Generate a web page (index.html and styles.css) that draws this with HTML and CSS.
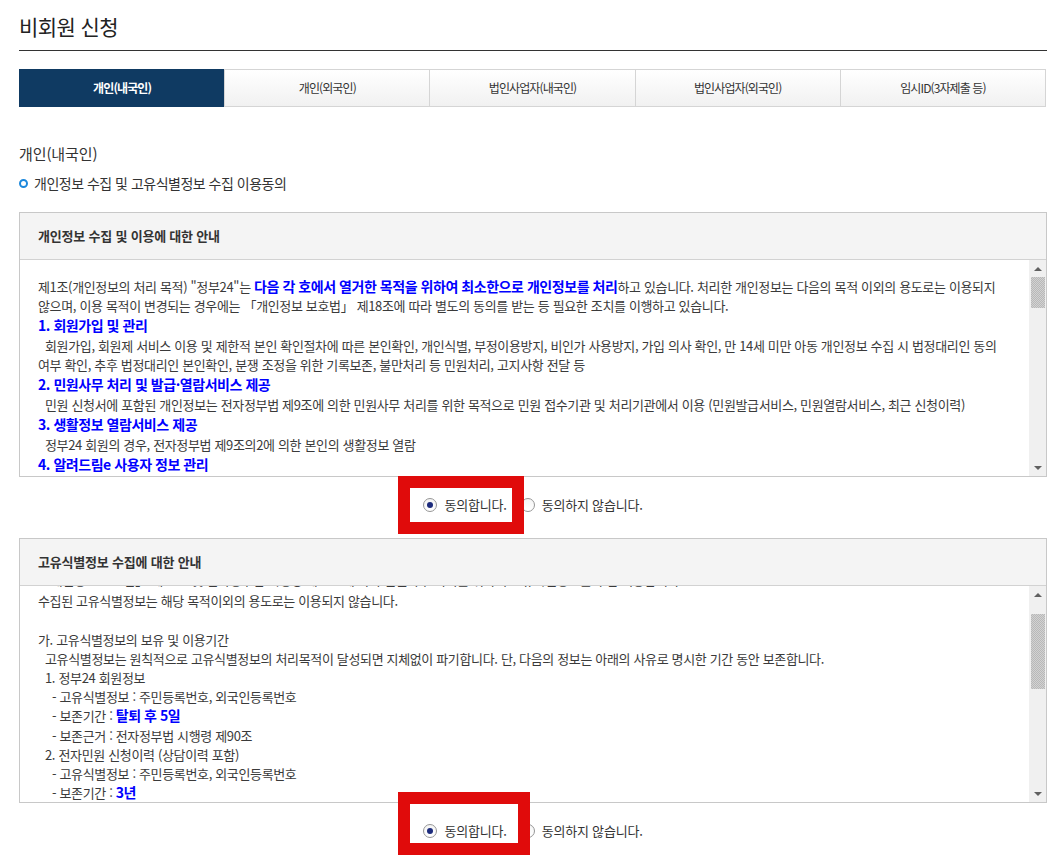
FILE: index.html
```html
<!DOCTYPE html>
<html lang="ko">
<head>
    <meta charset="UTF-8">
    <meta name="viewport" content="width=device-width, initial-scale=1.0">
    <title>비회원 신청</title>
    <link rel="stylesheet" href="styles.css">
</head>
<body>
<div class="wrap">
    <h1 class="page-title">비회원 신청</h1>

    <ul class="tabs">
        <li class="tab on">개인(내국인)</li>
        <li class="tab">개인(외국인)</li>
        <li class="tab">법인사업자(내국인)</li>
        <li class="tab">법인사업자(외국인)</li>
        <li class="tab">임시ID(3자제출 등)</li>
    </ul>

    <h2 class="sec-title">개인(내국인)</h2>
    <p class="bullet-title"><span class="ring"></span>개인정보 수집 및 고유식별정보 수집 이용동의</p>

    <div class="terms">
        <div class="terms-head">개인정보 수집 및 이용에 대한 안내</div>
        <div class="terms-body">
            <div class="terms-text">
                <p>제1조(개인정보의 처리 목적) "정부24"는 <b class="em">다음 각 호에서 열거한 목적을 위하여 최소한으로 개인정보를 처리</b>하고 있습니다. 처리한 개인정보는 다음의 목적 이외의 용도로는 이용되지 않으며, 이용 목적이 변경되는 경우에는 「개인정보 보호법」 제18조에 따라 별도의 동의를 받는 등 필요한 조치를 이행하고 있습니다.</p>
                <h3>1. 회원가입 및 관리</h3>
                <p class="ind">회원가입, 회원제 서비스 이용 및 제한적 본인 확인절차에 따른 본인확인, 개인식별, 부정이용방지, 비인가 사용방지, 가입 의사 확인, 만 14세 미만 아동 개인정보 수집 시 법정대리인 동의 여부 확인, 추후 법정대리인 본인확인, 분쟁 조정을 위한 기록보존, 불만처리 등 민원처리, 고지사항 전달 등</p>
                <h3>2. 민원사무 처리 및 발급·열람서비스 제공</h3>
                <p class="ind">민원 신청서에 포함된 개인정보는 전자정부법 제9조에 의한 민원사무 처리를 위한 목적으로 민원 접수기관 및 처리기관에서 이용 (민원발급서비스, 민원열람서비스, 최근 신청이력)</p>
                <h3>3. 생활정보 열람서비스 제공</h3>
                <p class="ind">정부24 회원의 경우, 전자정부법 제9조의2에 의한 본인의 생활정보 열람</p>
                <h3>4. 알려드림e 사용자 정보 관리</h3>
                <p class="ind">알려드림e 서비스 신청 시 입력한 연락처로 생활정보 및 민원처리 결과 안내</p>
            </div>
            <div class="scrollbar">
                <span class="sb-btn up"></span>
                <div class="sb-track"><span class="sb-thumb thumb1"></span></div>
                <span class="sb-btn down"></span>
            </div>
        </div>
    </div>

    <div class="agree">
        <label class="opt"><span class="radio checked"></span>동의합니다.</label>
        <label class="opt"><span class="radio"></span>동의하지 않습니다.</label>
        <span class="mark mark1"></span>
    </div>

    <div class="terms">
        <div class="terms-head">고유식별정보 수집에 대한 안내</div>
        <div class="terms-body">
            <div class="terms-text scrolled">
                <p>「개인정보 보호법」 제24조 및 전자정부법 시행령 제90조에 따라 민원사무 처리를 위하여 고유식별정보를 수집·이용합니다.</p>
                <p>수집된 고유식별정보는 해당 목적이외의 용도로는 이용되지 않습니다.</p>
                <p>&nbsp;</p>
                <p>가. 고유식별정보의 보유 및 이용기간</p>
                <p class="lv1">고유식별정보는 원칙적으로 고유식별정보의 처리목적이 달성되면 지체없이 파기합니다. 단, 다음의 정보는 아래의 사유로 명시한 기간 동안 보존합니다.</p>
                <p class="lv1">1. 정부24 회원정보</p>
                <p class="lv2">- 고유식별정보 : 주민등록번호, 외국인등록번호</p>
                <p class="lv2">- 보존기간 : <b class="em">탈퇴 후 5일</b></p>
                <p class="lv2">- 보존근거 : 전자정부법 시행령 제90조</p>
                <p class="lv1">2. 전자민원 신청이력 (상담이력 포함)</p>
                <p class="lv2">- 고유식별정보 : 주민등록번호, 외국인등록번호</p>
                <p class="lv2">- 보존기간 : <b class="em">3년</b></p>
                <p class="lv2">- 보존근거 : 전자정부법 시행령 제90조</p>
            </div>
            <div class="scrollbar">
                <span class="sb-btn up"></span>
                <div class="sb-track"><span class="sb-thumb thumb2"></span></div>
                <span class="sb-btn down"></span>
            </div>
        </div>
    </div>

    <div class="agree">
        <label class="opt"><span class="radio checked"></span>동의합니다.</label>
        <label class="opt"><span class="radio"></span>동의하지 않습니다.</label>
        <span class="mark mark2"></span>
    </div>
</div>
</body>
</html>
```

FILE: styles.css
```css
body {
    margin: 0;
    background: #fff;
    color: #333;
    font-family: "Noto Sans CJK KR", "Noto Sans", sans-serif;
    overflow: hidden;
}

.wrap {
    width: 1028px;
    margin-left: 19px;
}

.page-title {
    margin: 0;
    padding: 11px 0 9px;
    font-size: 21px;
    line-height: 30px;
    font-weight: 400;
    letter-spacing: -0.6px;
    color: #222;
    border-bottom: 1px solid #333;
}

.tabs {
    display: flex;
    margin: 18px 0 0;
    padding: 0;
    list-style: none;
    border: 1px solid #d5d5d5;
    width: 1027px;
    box-sizing: border-box;
}

.tab {
    flex: 1;
    height: 36px;
    line-height: 36px;
    text-align: center;
    font-size: 12px;
    letter-spacing: -0.9px;
    color: #333;
    background: linear-gradient(#ffffff, #f1f1f1);
    border-left: 1px solid #d5d5d5;
}

.tab:first-child {
    border-left: none;
}

.tab.on {
    background: #0f3a62;
    color: #fff;
    font-weight: 700;
    margin: -1px 0 -1px -1px;
    height: 38px;
    line-height: 38px;
    padding-left: 1px;
}

.sec-title {
    margin: 37px 0 0;
    font-size: 15px;
    line-height: 20px;
    font-weight: 400;
    letter-spacing: -0.1px;
    color: #333;
}

.bullet-title {
    display: flex;
    align-items: center;
    margin: 9px 0 0;
    font-size: 14px;
    line-height: 20px;
    letter-spacing: -0.5px;
    color: #333;
}

.ring {
    width: 9px;
    height: 9px;
    box-sizing: border-box;
    border: 2.5px solid #1c88dc;
    border-radius: 50%;
    margin-right: 6px;
}

.terms {
    margin-top: 19px;
    border: 1px solid #c8c8c8;
}

.agree + .terms {
    margin-top: 0;
}

.terms-head {
    height: 46px;
    line-height: 46px;
    padding-left: 18px;
    background: #f4f4f4;
    border-bottom: 1px solid #d2d2d2;
    font-size: 13px;
    font-weight: 700;
    letter-spacing: -0.2px;
    color: #333;
}

.terms-body {
    display: flex;
    height: 216px;
}

.terms-text {
    flex: 1;
    overflow: hidden;
    padding: 17px 10px 0 18px;
    font-size: 13px;
    line-height: 19px;
    letter-spacing: -0.35px;
    color: #3a3a3a;
    word-break: keep-all;
}

.terms-text p {
    margin: 0;
}

.terms-text h3 {
    margin: 0;
    font-size: 14px;
    line-height: 21px;
    letter-spacing: -0.45px;
    color: #0000ff;
}

.terms-text .ind {
    text-indent: 7px;
}

.em {
    font-size: 14px;
    letter-spacing: -0.45px;
    color: #0000ff;
}

.scrolled {
    padding-top: 0;
    line-height: 19.2px;
}

.scrolled p:first-child {
    margin-top: -16px;
    padding-bottom: 2px;
    white-space: nowrap;
}

.scrolled .lv1 {
    padding-left: 7px;
}

.scrolled .lv2 {
    padding-left: 14px;
}

.scrollbar {
    width: 17px;
    display: flex;
    flex-direction: column;
    background: #f0f0f0;
}

.sb-btn {
    height: 17px;
    display: flex;
    align-items: center;
    justify-content: center;
}

.sb-btn::before {
    content: "";
    border-left: 4px solid transparent;
    border-right: 4px solid transparent;
}

.sb-btn.up::before {
    border-bottom: 4px solid #606060;
}

.sb-btn.down::before {
    border-top: 4px solid #606060;
}

.sb-track {
    flex: 1;
}

.sb-thumb {
    display: block;
    margin: 0 1px 0 2px;
    background: repeating-conic-gradient(#b8b8b8 0 25%, #d2d2d2 0 50%) 0 0 / 2px 2px;
}

.thumb1 {
    height: 31px;
}

.thumb2 {
    margin-top: 11px;
    height: 75px;
}

.agree {
    position: relative;
    display: flex;
    justify-content: center;
    padding: 18px 0 23px;
    font-size: 13px;
    line-height: 20px;
    letter-spacing: -0.2px;
    color: #333;
}

.opt {
    display: flex;
    align-items: center;
    margin: 0 7px;
}

.radio {
    position: relative;
    width: 14px;
    height: 14px;
    box-sizing: border-box;
    border: 1px solid #969696;
    border-radius: 50%;
    background: linear-gradient(#f4f4f4, #ffffff);
    margin-right: 7px;
}

.radio.checked::after {
    content: "";
    position: absolute;
    left: 3px;
    top: 3px;
    width: 6px;
    height: 6px;
    border-radius: 50%;
    background: #1d2b7c;
}

.mark {
    position: absolute;
    left: 379px;
    box-sizing: border-box;
    border: 12px solid #e00b0b;
}

.mark1 {
    top: -1px;
    width: 126px;
    height: 58px;
}

.mark2 {
    top: -11px;
    width: 132px;
    height: 63px;
}
```
